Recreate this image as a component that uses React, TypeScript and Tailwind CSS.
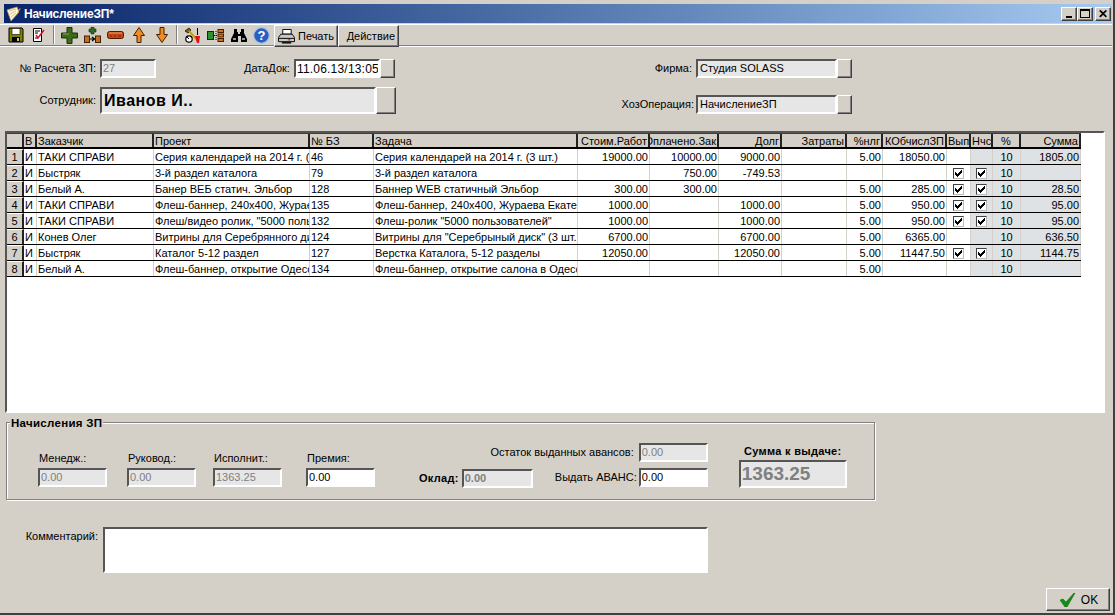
import React from 'react';

const sunken = 'border-2 border-t-[#555] border-l-[#555] border-r-white border-b-white';
const raised = 'border border-t-white border-l-white border-r-[#404040] border-b-[#404040] shadow-[inset_-1px_-1px_0_#808080]';
const font = "font-['Liberation_Sans',Arial,sans-serif]";

const columns = [
    { title: '', w: 'w-[17px]', align: 'center' },
    { title: 'В', w: 'w-[13px]', align: 'left' },
    { title: 'Заказчик', w: 'w-[117px]', align: 'left' },
    { title: 'Проект', w: 'w-[156px]', align: 'left' },
    { title: '№ БЗ', w: 'w-[64px]', align: 'left' },
    { title: 'Задача', w: 'w-[204px]', align: 'left' },
    { title: 'Стоим.Работ', w: 'w-[72px]', align: 'right' },
    { title: 'Оплачено.Зак', w: 'w-[69px]', align: 'right' },
    { title: 'Долг', w: 'w-[63px]', align: 'right' },
    { title: 'Затраты', w: 'w-[65px]', align: 'right' },
    { title: '%нлг', w: 'w-[36px]', align: 'right' },
    { title: 'КОбчислЗП', w: 'w-[64px]', align: 'right' },
    { title: 'Вып', w: 'w-[24px]', align: 'left' },
    { title: 'Нчс', w: 'w-[22px]', align: 'left' },
    { title: '%', w: 'w-[28px]', align: 'center' },
    { title: 'Сумма', w: 'w-[60px]', align: 'right' },
];

const rows: (string | boolean)[][] = [
    ['1', 'И', 'ТАКИ СПРАВИ', 'Серия календарей на 2014 г. (3 шт.)', '46', 'Серия календарей на 2014 г. (3 шт.)', '19000.00', '10000.00', '9000.00', '', '5.00', '18050.00', false, false, '10', '1805.00'],
    ['2', 'И', 'Быстряк', '3-й раздел каталога', '79', '3-й раздел каталога', '', '750.00', '-749.53', '', '', '', true, true, '10', ''],
    ['3', 'И', 'Белый А.', 'Банер ВЕБ статич. Эльбор', '128', 'Баннер WEB статичный Эльбор', '300.00', '300.00', '', '', '5.00', '285.00', true, true, '10', '28.50'],
    ['4', 'И', 'ТАКИ СПРАВИ', 'Флеш-баннер, 240х400, Жураева Екатерина', '135', 'Флеш-баннер, 240х400, Жураева Екатерина', '1000.00', '', '1000.00', '', '5.00', '950.00', true, true, '10', '95.00'],
    ['5', 'И', 'ТАКИ СПРАВИ', 'Флеш/видео ролик, "5000 пользователей"', '132', 'Флеш-ролик "5000 пользователей"', '1000.00', '', '1000.00', '', '5.00', '950.00', true, true, '10', '95.00'],
    ['6', 'И', 'Конев Олег', 'Витрины для Серебрянного диска', '124', 'Витрины для "Серебрыный диск" (3 шт.)', '6700.00', '', '6700.00', '', '5.00', '6365.00', false, false, '10', '636.50'],
    ['7', 'И', 'Быстряк', 'Каталог 5-12 раздел', '127', 'Верстка Каталога, 5-12 разделы', '12050.00', '', '12050.00', '', '5.00', '11447.50', true, true, '10', '1144.75'],
    ['8', 'И', 'Белый А.', 'Флеш-баннер, открытие Одессы', '134', 'Флеш-баннер, открытие салона в Одессе', '', '', '', '', '5.00', '', false, false, '10', ''],
];

const alignClass = (align: string) =>
    align === 'right' ? 'justify-end pr-[1px]' : align === 'center' ? 'justify-center' : 'justify-start pl-[1px]';

const Check = () => (
    <span className="w-[11px] h-[11px] bg-white border border-t-[#404040] border-l-[#404040] border-r-[#bbb] border-b-[#bbb] flex items-center justify-center">
        <svg width="9" height="9" viewBox="0 0 9 9" shapeRendering="crispEdges"><path d="M1 3h1v1h1v1h1V4h1V3h1V2h1V1h1v3H7v1H6v1H5v1H4v1H3V7H2V6H1z" fill="#000" /></svg>
    </span>
);

const Field = ({ w, h = 'h-[19px]', disabled = false, value = '', className = '' }: { w: string; h?: string; disabled?: boolean; value?: string; className?: string }) => (
    <div className={`${w} ${h} ${sunken} ${disabled ? 'bg-[#e6e6e6] text-[#808080]' : 'bg-white text-black'} flex items-center pl-[1px] overflow-hidden whitespace-nowrap text-[11px] ${className}`}>{value}</div>
);

const DotButton = ({ h = 'h-[19px]', w = 'w-[15px]' }: { h?: string; w?: string }) => <div className={`${w} ${h} bg-[#d4d0c8] ${raised}`} />;

const Floppy = () => (
    <svg width="16" height="16" viewBox="0 0 16 16"><path d="M1 1h13l1 1v13H1z" fill="#808000" stroke="#000" /><rect x="4" y="1.500" width="8" height="6" fill="#fff" stroke="#000" strokeWidth=".6" /><rect x="4" y="10" width="8" height="5" fill="#000" /><rect x="9" y="11" width="2" height="3" fill="#c8c8a0" /></svg>
);
const CheckDoc = () => (
    <svg width="16" height="16" viewBox="0 0 16 16"><path d="M2.500 1.500h8v13h-8z" fill="#fff" stroke="#000" /><path d="M4 4h5M4 6h3M4 11h3" stroke="#000" /><path d="M5 8l2 3 6-8" fill="none" stroke="#d01030" strokeWidth="1.500" /></svg>
);
const Plus = () => (
    <svg width="17" height="17" viewBox="0 0 17 17"><path d="M6 .5h5v5.500h5.500v5H11v5.500H6V11H.5V6H6z" fill="#3d6b18" stroke="#1d3008" /><path d="M2 7h6" stroke="#88a860" /></svg>
);
const HierPlus = () => (
    <svg width="17" height="16" viewBox="0 0 17 16"><path d="M7 0h3v2h2v3h-2v2H7V5H5V2h2z" fill="#2f6a18" stroke="#12300a" strokeWidth=".6" /><rect x=".5" y="9" width="5" height="6.500" fill="#c07020" stroke="#402000" /><rect x="11.500" y="9" width="5" height="6.500" fill="#c07020" stroke="#402000" /><path d="M6 12h4M8 10l2.500 2-2.500 2" fill="none" stroke="#000" strokeWidth="1.200" /></svg>
);
const Minus = () => (
    <svg width="17" height="8" viewBox="0 0 17 8"><rect x=".5" y=".5" width="16" height="7" rx="2" fill="#c04818" stroke="#501800" /><path d="M2 2h13" stroke="#f0a060" /><path d="M3 5h2M7 5h2M11 5h3" stroke="#802808" /></svg>
);
const ArrowUp = () => (
    <svg width="12" height="16" viewBox="0 0 12 16"><path d="M6 .5l5.500 8H8v7H4v-7H.5z" fill="#f58a1f" stroke="#402000" /></svg>
);
const ArrowDown = () => (
    <svg width="12" height="16" viewBox="0 0 12 16"><path d="M6 15.500l5.500-8H8v-7H4v7H.5z" fill="#f58a1f" stroke="#402000" /></svg>
);
const Tools = () => (
    <svg width="17" height="17" viewBox="0 0 17 17"><path d="M1 4l4-3 2 2-3 3z" fill="#806000" stroke="#000" strokeWidth=".7" /><path d="M5 4l9 10" stroke="#d0a000" strokeWidth="2" /><circle cx="5" cy="12" r="3.200" fill="#fff" stroke="#000" strokeWidth="1.200" /><path d="M2 9l3 3" stroke="#000" /><path d="M13 1h1v7h-1z" fill="#000" /><path d="M11 9h5l-1 7h-2z" fill="#e01020" /></svg>
);
const Tree = () => (
    <svg width="17" height="13" viewBox="0 0 17 13"><rect x=".5" y="2.500" width="6" height="8" fill="#2f9030" stroke="#0a3010" /><path d="M7 6.500h3M9 2v9" stroke="#000" strokeDasharray="1 1" /><rect x="11" y="0.500" width="5.500" height="3" fill="#d07020" stroke="#402000" /><rect x="11" y="5" width="5.500" height="3" fill="#d07020" stroke="#402000" /><rect x="11" y="9.500" width="5.500" height="3" fill="#d07020" stroke="#402000" /></svg>
);
const Binoculars = () => (
    <svg width="16" height="13" viewBox="0 0 16 13"><path d="M3 0h3v3h1v2h2V3h1V0h3v4l3 6v3h-6V7H7v6H0v-3l3-6z" fill="#000" /><path d="M2 9h3v2H2zM11 9h3v2h-3z" fill="#9098a8" /></svg>
);
const Help = () => (
    <svg width="17" height="17" viewBox="0 0 17 17"><circle cx="8.500" cy="8.500" r="7.800" fill="#2a5fc0" stroke="#a8c4ee" strokeWidth="1.200" /><text x="8.500" y="13" textAnchor="middle" fontSize="13" fontWeight="700" fill="#fff" fontFamily="Liberation Sans">?</text></svg>
);
const Printer = () => (
    <svg width="17" height="15" viewBox="0 0 18 16"><path d="M5 .5h9v5H5z" fill="#fff" stroke="#000" /><path d="M3 5.500h12l2.500 3.500v4.500H.5V9z" fill="#c8c8c8" stroke="#000" /><path d="M1 10h16" stroke="#000" /><path d="M4 14h10v1.500H4z" fill="#000" /><path d="M9 11.500h2" stroke="#e8c020" strokeWidth="1.500" /><path d="M11 11.500h2" stroke="#d02020" strokeWidth="1.500" /></svg>
);
const GreenCheck = () => (
    <svg width="16" height="14" viewBox="0 0 16 14"><path d="M0 7l3-1 3 3 8-9h1L7 14H5z" fill="#109010" stroke="#0a5a0a" strokeWidth=".5" /></svg>
);
const AppIcon = () => (
    <svg width="16" height="16" viewBox="0 0 16 16"><path d="M1 4l10-3 2 5-8 9z" fill="#fff8d8" stroke="#b09860" strokeWidth=".7" /><path d="M3 5l7-2M4 8l6-3M5 11l5-4" stroke="#c8a868" strokeWidth=".7" /><path d="M13 3l2-1-5 8z" fill="#e0a030" /></svg>
);

const tools = [
    [<Floppy key="f" />, <CheckDoc key="c" />],
    [<Plus key="p" />, <HierPlus key="h" />, <Minus key="m" />, <ArrowUp key="u" />, <ArrowDown key="d" />],
    [<Tools key="t" />, <Tree key="r" />, <Binoculars key="b" />, <Help key="q" />],
];

const WinButton = ({ children, className = '' }: { children: React.ReactNode; className?: string }) => (
    <div className={`w-[16px] h-[14px] bg-[#d4d0c8] ${raised} flex items-center justify-center ${className}`}>{children}</div>
);

const Label = ({ children, className = '' }: { children: React.ReactNode; className?: string }) => (
    <span className={`text-[11px] leading-[13px] whitespace-nowrap ${className}`}>{children}</span>
);

const SalaryField = ({ label, value, w, disabled = true, className = '' }: { label: string; value: string; w: string; disabled?: boolean; className?: string }) => (
    <div className={`flex flex-col gap-[3px] ${className}`}>
        <Label className="pl-[1px]">{label}</Label>
        <Field w={w} disabled={disabled} value={value} />
    </div>
);

export default function App() {
    return (
        <div className={`${font} w-[1115px] h-[615px] bg-[#d4d0c8] text-black flex flex-col overflow-hidden border-b-2 border-r-2 border-b-[#404040] border-r-[#404040] pt-[4px]`}>
            {/* title bar */}
            <div className="h-[19px] mx-[4px] mr-[1px] shrink-0 flex items-center bg-gradient-to-r from-[#0a246a] to-[#a6caf0] pl-[2px] pr-[1px]">
                <AppIcon />
                <span className="ml-[2px] text-white font-bold text-[12px] tracking-[-0.2px] leading-none">НачислениеЗП*</span>
                <div className="ml-auto flex items-center">
                    <WinButton><span className="w-[6px] h-[2px] bg-black mt-[6px]" /></WinButton>
                    <WinButton><span className="w-[10px] h-[9px] border border-black border-t-2" /></WinButton>
                    <WinButton className="ml-[2px]"><span className="text-[12px] leading-none font-bold">✕</span></WinButton>
                </div>
            </div>

            {/* toolbar */}
            <div className="h-[22px] mt-[1px] shrink-0 border-t border-t-white border-b border-b-[#808080] shadow-[0_1px_0_#fff] flex items-start pl-[4px] mr-[1px]">
                {tools.map((group, i) => (
                    <React.Fragment key={i}>
                        {group.map((icon, j) => (
                            <div key={j} className="w-[23px] h-[20px] flex items-center justify-center">{icon}</div>
                        ))}
                        {i < 2 && <span className="w-[2px] h-[19px] mx-[3px] bg-[#808080] border-r border-r-white" />}
                    </React.Fragment>
                ))}
                <div className={`relative ml-[1px] w-[64px] h-[22px] shrink-0 bg-[#d4d0c8] ${raised} flex items-center justify-center gap-[3px] text-[11px]`}><Printer />Печать</div>
                <div className={`relative w-[61px] h-[22px] shrink-0 bg-[#d4d0c8] ${raised} flex items-center justify-end pr-[3px] text-[11px]`}>Действие</div>
            </div>

            {/* form header */}
            <div className="h-[85px] shrink-0 flex pt-[13px]">
                <div className="w-[600px] flex flex-col">
                    <div className="flex items-center h-[19px]">
                        <Label className="w-[96px] text-right">№ Расчета ЗП:</Label>
                        <Field w="w-[56px]" disabled value="27" className="ml-[4px]" />
                        <Label className="ml-[88px]">ДатаДок:</Label>
                        <Field w="w-[86px]" value="11.06.13/13:05" className="ml-[4px] text-[12px] tracking-[0.2px]" />
                        <DotButton />
                    </div>
                    <div className="flex items-center mt-[9px]">
                        <Label className="w-[96px] text-right">Сотрудник:</Label>
                        <Field w="w-[276px]" h="h-[27px]" disabled value="Иванов И.." className="ml-[4px] !text-black !text-[16px] font-bold tracking-[0.5px] pl-[2px]" />
                        <DotButton w="w-[20px]" h="h-[27px]" />
                    </div>
                </div>
                <div className="flex flex-col">
                    <div className="flex items-center h-[19px]">
                        <Label className="w-[92px] text-right">Фирма:</Label>
                        <Field w="w-[141px]" value="Студия SOLASS" className="ml-[4px] !bg-[#e6e6e6] pl-[2px]" />
                        <DotButton />
                    </div>
                    <div className="flex items-center h-[19px] mt-[17px]">
                        <Label className="w-[94px] text-right">ХозОперация:</Label>
                        <Field w="w-[141px]" value="НачислениеЗП" className="ml-[2px] !bg-[#e6e6e6] pl-[2px]" />
                        <DotButton />
                    </div>
                </div>
            </div>

            {/* grid */}
            <div className={`ml-[5px] w-[1100px] h-[282px] shrink-0 bg-white ${sunken} overflow-hidden text-[11px]`}>
                <div className="flex w-max h-[16px] border-b-2 border-b-black border-t border-t-[#404040]">
                    {columns.map((col, i) => (
                        <div key={i} className={`${col.w} shrink-0 bg-[#d4d0c8] border-r-2 border-r-[#222] flex items-center pt-[2px] overflow-hidden whitespace-nowrap leading-none ${alignClass(col.align)}`}>
                            <span className="shrink-0">{col.title}</span>
                        </div>
                    ))}
                </div>
                {rows.map((row, r) => (
                    <div key={r} className="flex w-max h-[16px] border-b border-b-black">
                        {row.map((cell, c) => {
                            const col = columns[c];
                            const grey = c >= 13;
                            return (
                                <div key={c} className={`${col.w} shrink-0 border-r flex items-center pt-[1px] overflow-hidden whitespace-nowrap leading-none ${c === 0 ? 'bg-[#d4d0c8] border-r-2 border-r-[#222] border-t border-t-white' : 'border-r-[#d4d0c8]'} ${grey ? 'bg-[#dee2e4]' : ''} ${c === 12 || c === 13 ? 'justify-center' : alignClass(col.align)}`}>
                                    {cell === true ? <Check /> : cell === false ? null : <span className="shrink-0">{cell}</span>}
                                </div>
                            );
                        })}
                    </div>
                ))}
            </div>

            {/* salary group */}
            <fieldset className="ml-[6px] mt-[3px] w-[869px] h-[84px] shrink-0 border border-[#808080] shadow-[inset_1px_1px_0_#fff,1px_1px_0_#fff]">
                <legend className="relative top-[1px] ml-[3px] px-[1px] bg-[#d4d0c8] text-[11.500px] font-bold leading-[13px] tracking-[0.3px]">Начисления ЗП</legend>
                <div className="flex items-end mt-[6px] pl-[31px] h-[52px]">
                    <SalaryField label="Менедж.:" value="0.00" w="w-[69px]" />
                    <SalaryField label="Руковод.:" value="0.00" w="w-[69px]" className="ml-[20px]" />
                    <SalaryField label="Исполнит.:" value="1363.25" w="w-[69px]" className="ml-[17px]" />
                    <SalaryField label="Премия:" value="0.00" w="w-[69px]" disabled={false} className="ml-[24px]" />
                    <div className="flex items-center ml-[44px] mb-[-1px]">
                        <Label className="font-bold tracking-[0.3px]">Оклад:</Label>
                        <Field w="w-[71px]" disabled value="0.00" className="ml-[3px] font-bold" />
                    </div>
                    <div className="flex flex-col items-end gap-[6px] w-[175px]">
                        <div className="flex items-center">
                            <Label>Остаток выданных авансов:</Label>
                            <Field w="w-[69px]" disabled value="0.00" className="ml-[5px]" />
                        </div>
                        <div className="flex items-center">
                            <Label>Выдать АВАНС:</Label>
                            <Field w="w-[69px]" value="0.00" className="ml-[2px]" />
                        </div>
                    </div>
                    <div className="flex flex-col items-center ml-[31px] mb-[-1px]">
                        <Label className="font-bold tracking-[0.3px] relative top-[1px]">Сумма к выдаче:</Label>
                        <Field w="w-[108px]" h="h-[28px]" disabled value="1363.25" className="!text-[19px] font-bold mt-[3px]" />
                    </div>
                </div>
            </fieldset>

            {/* comment */}
            <div className="flex mt-[27px] shrink-0">
                <Label className="w-[98px] text-right mt-[3px]">Комментарий:</Label>
                <div className={`ml-[5px] w-[605px] h-[46px] bg-white ${sunken}`} />
            </div>

            {/* footer */}
            <div className="flex justify-end mt-[15px] pr-[3px]">
                <div className={`w-[64px] h-[23px] ${raised} flex items-center justify-center gap-[5px] pl-[2px] text-[12px]`}><GreenCheck />OK</div>
            </div>
        </div>
    );
}
